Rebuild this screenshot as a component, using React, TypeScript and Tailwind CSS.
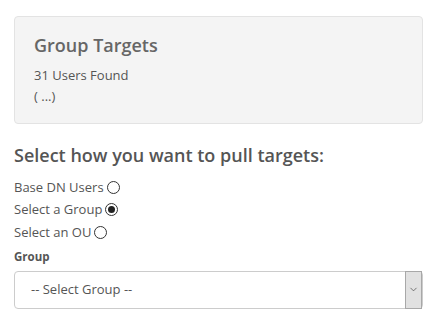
import { ChevronDown } from 'lucide-react';

const options = [
  { label: 'Base DN Users', checked: false },
  { label: 'Select a Group', checked: true },
  { label: 'Select an OU', checked: false },
];

function Radio({ checked }: { checked: boolean }) {
  return (
    <span className="ml-[3px] inline-flex h-[13px] w-[13px] items-center justify-center rounded-full border border-[#333] bg-white">
      {checked && <span className="h-[7px] w-[7px] rounded-full bg-[#222]" />}
    </span>
  );
}

export default function App() {
  return (
    <div className="min-h-screen bg-white px-[14px] pt-[16px] font-['Open_Sans',sans-serif] text-[#555]">
      <div className="rounded-[4px] border border-[#e3e3e3] bg-[#f4f4f4] px-[19px] pb-[16px] pt-[16px]">
        <h3 className="text-[18px] font-semibold leading-[24px] text-[#666]">Group Targets</h3>
        <p className="mt-[8px] text-[13px] leading-[21px]">31 Users Found</p>
        <p className="text-[13px] leading-[21px]">( ...)</p>
      </div>

      <h4 className="mt-[18px] text-[18px] font-semibold leading-[26px] text-[#555]">
        Select how you want to pull targets:
      </h4>

      <div className="mt-[8px] flex flex-col">
        {options.map((o) => (
          <label key={o.label} className="flex h-[22.5px] items-center text-[13px]">
            {o.label}
            <Radio checked={o.checked} />
          </label>
        ))}
      </div>

      <div className="mt-[5px] text-[11.5px] font-bold leading-[16px] text-[#555]">Group</div>

      <div className="mt-[6px] flex h-[38px] items-stretch rounded-[4px] border border-[#ccc] bg-white">
        <div className="flex flex-1 items-center pl-[16px] text-[13px] text-[#555]">-- Select Group --</div>
        <div className="my-[-1px] flex w-[17px] items-center justify-center border border-[#a8a8a8] bg-[#e1e1e1]">
          <ChevronDown size={11} strokeWidth={1.5} className="text-[#444]" />
        </div>
      </div>
    </div>
  );
}
